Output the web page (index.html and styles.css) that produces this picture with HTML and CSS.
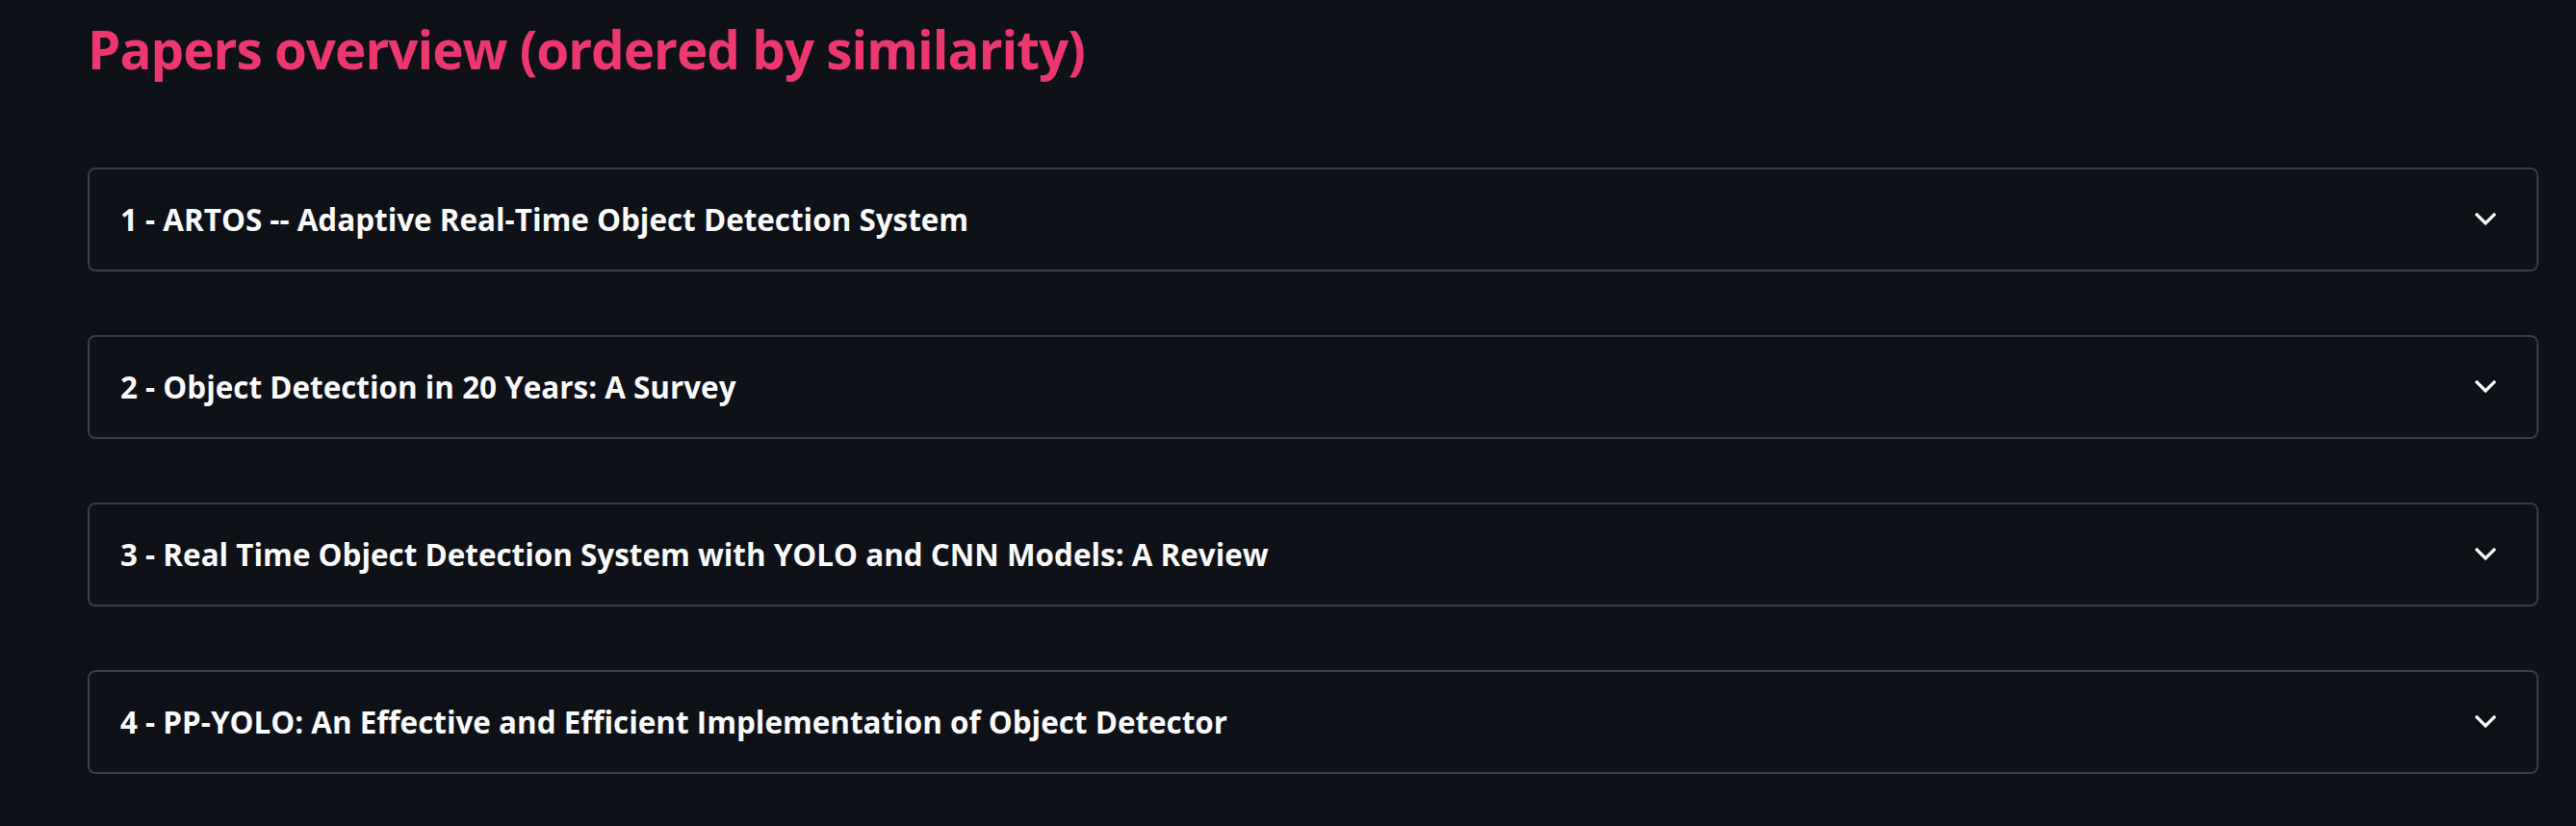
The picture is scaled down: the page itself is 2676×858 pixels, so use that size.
FILE: index.html
```html
<!DOCTYPE html>
<html lang="en">
<head>
<meta charset="utf-8">
<title>Papers overview</title>
<link rel="stylesheet" href="styles.css">
</head>
<body>
<main class="page">
  <h2 class="title">Papers overview (ordered by similarity)</h2>
  <div class="list">
    <details class="expander">
      <summary class="summary"><span class="label">1 - ARTOS -- Adaptive Real-Time Object Detection System</span>
        <svg class="chev" viewBox="0 0 22 14" width="22" height="14"><polyline points="2,2 11,11 20,2" fill="none" stroke="#fafafa" stroke-width="3.2" stroke-linecap="square" stroke-linejoin="miter"/></svg>
      </summary>
    </details>
    <details class="expander">
      <summary class="summary"><span class="label">2 - Object Detection in 20 Years: A Survey</span>
        <svg class="chev" viewBox="0 0 22 14" width="22" height="14"><polyline points="2,2 11,11 20,2" fill="none" stroke="#fafafa" stroke-width="3.2" stroke-linecap="square" stroke-linejoin="miter"/></svg>
      </summary>
    </details>
    <details class="expander">
      <summary class="summary"><span class="label">3 - Real Time Object Detection System with YOLO and CNN Models: A Review</span>
        <svg class="chev" viewBox="0 0 22 14" width="22" height="14"><polyline points="2,2 11,11 20,2" fill="none" stroke="#fafafa" stroke-width="3.2" stroke-linecap="square" stroke-linejoin="miter"/></svg>
      </summary>
    </details>
    <details class="expander">
      <summary class="summary"><span class="label">4 - PP-YOLO: An Effective and Efficient Implementation of Object Detector</span>
        <svg class="chev" viewBox="0 0 22 14" width="22" height="14"><polyline points="2,2 11,11 20,2" fill="none" stroke="#fafafa" stroke-width="3.2" stroke-linecap="square" stroke-linejoin="miter"/></svg>
      </summary>
    </details>
  </div>
</main>
</body>
</html>
```

FILE: styles.css
```css
html, body {
  margin: 0;
  padding: 0;
  background: #0e1117;
}
body {
  font-family: "Open Sans", Lato, sans-serif;
  color: #fafafa;
  width: 2676px;
  height: 858px;
  overflow: hidden;
}
.page {
  padding: 0 39px 0 91px;
}
.title {
  margin: 0;
  padding-top: 17px;
  font-size: 54.8px;
  line-height: 68px;
  font-weight: 700;
  color: #ed3770;
  letter-spacing: -1px;
}
.list {
  display: flex;
  flex-direction: column;
  gap: 66px;
  margin-top: 89px;
}
.expander {
  border: 2px solid #3a3c43;
  border-radius: 8px;
  height: 108px;
  box-sizing: border-box;
}
.summary {
  list-style: none;
  display: flex;
  align-items: center;
  justify-content: space-between;
  height: 104px;
  padding: 0 42px 0 32px;
  cursor: pointer;
}
.summary::-webkit-details-marker { display: none; }
.label {
  font-size: 31.4px;
  font-weight: 700;
  line-height: 1;
}
.chev {
  display: block;
}
```
